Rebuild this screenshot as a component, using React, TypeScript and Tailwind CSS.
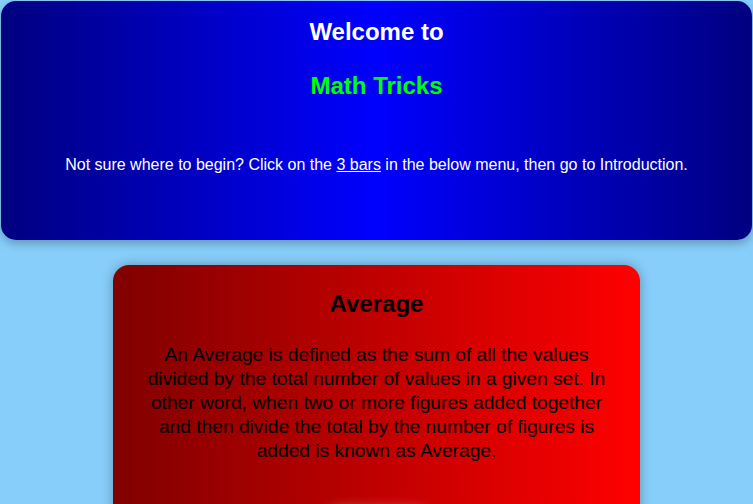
const App = () => {
  return (
    <div className="min-h-screen bg-[#87cefa] pt-px font-['Liberation_Sans',Arial,sans-serif] overflow-hidden h-[504px]">
      <header className="mx-px h-[239px] rounded-[15px] bg-[linear-gradient(to_right,#000080,#0000ff,#000080)] text-center shadow-[0_4px_8px_rgba(0,0,0,0.25)] pt-[17px]">
        <h1 className="text-[24px] leading-[28px] font-bold text-white">Welcome to</h1>
        <h2 className="mt-[26px] text-[24px] leading-[28px] font-bold text-[#00ff00]">Math Tricks</h2>
        <p className="mt-[55px] text-[16px] leading-[20px] text-white">
          Not sure where to begin? Click on the <span className="underline">3 bars</span> in the below menu, then go to Introduction.
        </p>
      </header>

      <section className="mx-auto mt-[25px] w-[70%] rounded-t-[16px] bg-[linear-gradient(to_right,#800000,#ff0000)] shadow-[0_0_12px_rgba(0,0,0,0.3)] px-[30px] pt-[25px] pb-8 text-center text-black">
        <h2 className="text-[24px] leading-[28px] font-bold">Average</h2>
        <p className="mt-[25px] text-[19.2px] leading-[24px]">
          An Average is defined as the sum of all the values divided by the total number of values in a given set. In other word, when two or more figures added together and then divide the total by the number of figures is added is known as Average.
        </p>
        <div className="mx-auto mt-[44px] h-10 w-[110px] rounded-full shadow-[0_0_12px_rgba(255,255,255,0.3)]" />
      </section>
    </div>
  );
};

export default App;
